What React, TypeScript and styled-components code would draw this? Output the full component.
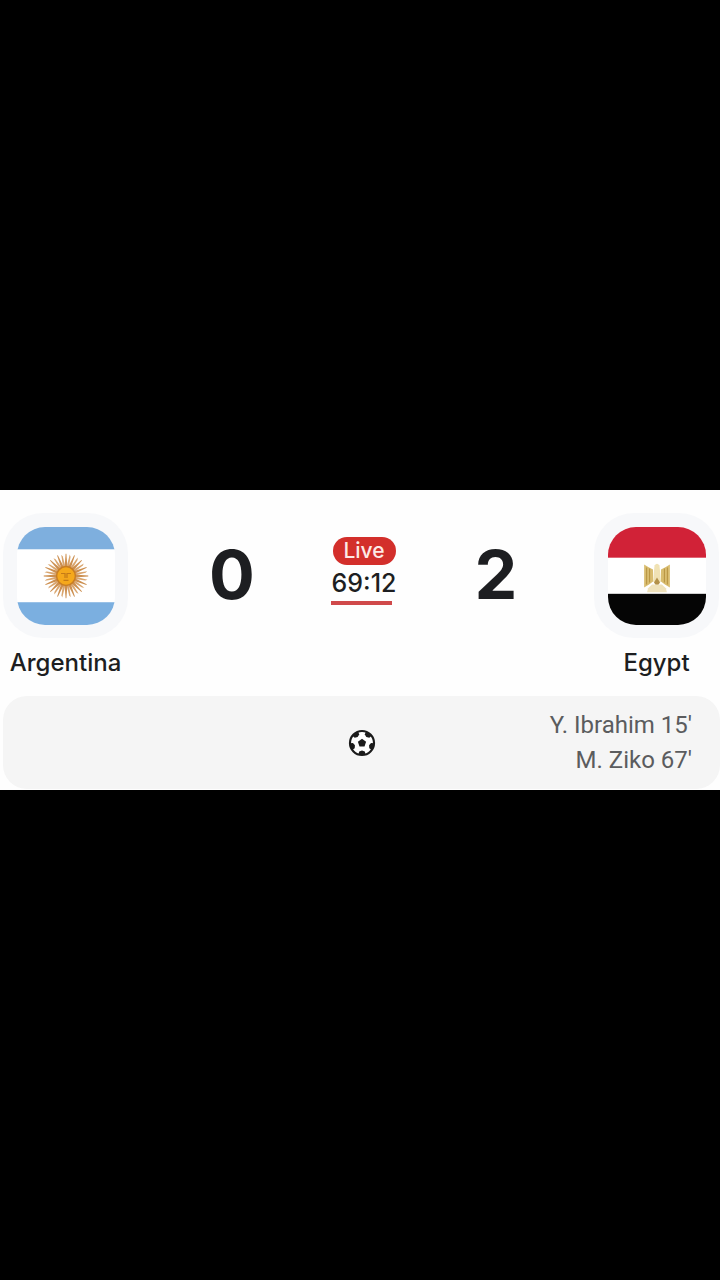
import React from "react";
import styled, { createGlobalStyle } from "styled-components";

const GlobalStyle = createGlobalStyle`
  *, *::before, *::after { box-sizing: border-box; }
  body {
    margin: 0;
    background: #000;
    color: #1d1e21;
    font-family: Inter, "Liberation Sans", sans-serif;
  }
`;

const Page = styled.main`
  min-height: 100vh;
  display: flex;
  flex-direction: column;
  justify-content: center;
`;

const MatchCard = styled.article`
  background: #fefefe;
  padding: 23px 0 1px;
`;

const Scoreboard = styled.section`
  display: flex;
  align-items: flex-start;
  padding: 0 1px 0 3px;
`;

const Team = styled.div`
  flex: none;
  width: 125px;
  display: flex;
  flex-direction: column;
  align-items: center;
`;

const Badge = styled.div`
  width: 100%;
  height: 125px;
  display: grid;
  place-items: center;
  border-radius: 40px;
  background: #f7f8fa;
`;

const Flag = styled.svg`
  display: block;
  width: 98px;
  height: 98px;
  border-radius: 28px;
`;

const TeamName = styled.h2`
  margin: 9px 0 0;
  font-size: 24px;
  font-weight: 500;
  line-height: 32px;
`;

const Result = styled.div`
  flex: 1;
  display: flex;
  justify-content: center;
  gap: 78px;
  padding: 24px 0 0 6px;
`;

const Score = styled.span`
  width: 42px;
  display: flex;
  justify-content: center;
  font-size: 68px;
  font-weight: 700;
  line-height: 74px;
`;

const Status = styled.div`
  width: 66px;
  display: flex;
  flex-direction: column;
  align-items: center;
`;

const LivePill = styled.span`
  width: 63px;
  border-radius: 14px;
  background: #d32f2b;
  color: #fde9e6;
  font-size: 21px;
  font-weight: 500;
  line-height: 28px;
  text-align: center;
`;

const Clock = styled.time`
  font-size: 25px;
  font-weight: 500;
  line-height: 36px;
`;

const Progress = styled.div`
  align-self: flex-start;
  width: 61px;
  height: 4px;
  background: #d0494a;
`;

const Goals = styled.section`
  margin: 17px 0 0 3px;
  padding: 12px 0 11px;
  display: grid;
  grid-template-columns: 1fr 28px 1fr;
  align-items: center;
  border-radius: 24px;
  background: #f5f5f5;
`;

const Ball = styled.svg`
  grid-column: 2;
  display: block;
  width: 28px;
  height: 28px;
`;

const Scorers = styled.ul`
  margin: 0;
  padding: 0 28px 0 0;
  list-style: none;
  text-align: right;
  white-space: nowrap;
  color: #5b5c5e;
  font-family: Roboto, sans-serif;
  font-size: 24px;
  line-height: 35px;
`;

const rays = Array.from({ length: 32 }, (_, i) => i * 11.25);

function ArgentinaFlag() {
  return (
    <Flag viewBox="0 0 99 99" role="img" aria-label="Flag of Argentina">
      <rect width="99" height="99" fill="#fff" />
      <rect width="99" height="22.5" fill="#7eafde" />
      <rect y="76" width="99" height="23" fill="#7bafe0" />
      <g transform="translate(49.5 49.5)">
        {rays.map((angle, i) => (
          <path
            key={angle}
            d={i % 2 ? "M-1.3 -8 L-.5 -22 L.7 -20 L1.3 -8Z" : "M-1.5 -8 L-.4 -22.5 H.4 L1.5 -8Z"}
            fill={i % 2 ? "#d9a56e" : "#cc8f50"}
            transform={`rotate(${angle})`}
          />
        ))}
        <circle r="9.5" fill="#f5a81c" stroke="#c87d24" strokeWidth="1.5" />
        <path d="M-5 -2.5 H-1 V2 M5 -2.5 H1 V2 M-2.5 4.5 H2.5" fill="none" stroke="#c47a17" strokeWidth="1.2" />
      </g>
    </Flag>
  );
}

function EgyptFlag() {
  return (
    <Flag viewBox="0 0 99 99" role="img" aria-label="Flag of Egypt">
      <rect width="99" height="99" fill="#fff" />
      <rect width="99" height="31" fill="#d12237" />
      <rect y="67.5" width="99" height="31.5" fill="#050505" />
      <g transform="translate(49.5 50)">
        <path d="M-13 -12 L-8 -9 L-4 -7 V5 L-8 8 L-13 11Z" fill="#d9bd70" />
        <path d="M13 -12 L8 -9 L4 -7 V5 L8 8 L13 11Z" fill="#d9bd70" />
        <path d="M-10.5 -9 V8 M-7.5 -8 V6 M10.5 -9 V8 M7.5 -8 V6" stroke="#b99645" strokeWidth="1.1" />
        <path d="M-2.5 -11 Q0 -15 2.5 -11 L3 -6 L4 5 L0 8 L-4 5 L-3 -6Z" fill="#f0e2b4" />
        <path d="M0 1 L3 6 L1 9 H-1 L-3 6Z" fill="#b3914a" />
        <path d="M-9 12 L-5 8 H5 L9 12 L10 16 H-10Z" fill="#efe2bb" />
      </g>
    </Flag>
  );
}

const spots = [36, 108, 180, 252, 324];

function Football() {
  return (
    <Ball viewBox="-14 -14 28 28" role="img" aria-label="Goals">
      <circle r="12" fill="#fff" stroke="#1b1b1b" strokeWidth="2.2" />
      <path d="M0 -4.3 L4.1 -1.3 L2.5 3.5 H-2.5 L-4.1 -1.3Z" fill="#1b1b1b" />
      {spots.map((angle) => (
        <path
          key={angle}
          d="M-3.6 -11.5 L-2.8 -8.6 L0 -7.4 L2.8 -8.6 L3.6 -11.5Z"
          fill="#1b1b1b"
          transform={`rotate(${angle})`}
        />
      ))}
    </Ball>
  );
}

export default function App() {
  return (
    <>
      <GlobalStyle />
      <Page>
        <MatchCard>
          <Scoreboard>
            <Team>
              <Badge><ArgentinaFlag /></Badge>
              <TeamName>Argentina</TeamName>
            </Team>
            <Result>
              <Score>0</Score>
              <Status>
                <LivePill>Live</LivePill>
                <Clock>69:12</Clock>
                <Progress />
              </Status>
              <Score>2</Score>
            </Result>
            <Team>
              <Badge><EgyptFlag /></Badge>
              <TeamName>Egypt</TeamName>
            </Team>
          </Scoreboard>
          <Goals>
            <Football />
            <Scorers>
              <li>Y. Ibrahim 15'</li>
              <li>M. Ziko 67'</li>
            </Scorers>
          </Goals>
        </MatchCard>
      </Page>
    </>
  );
}
